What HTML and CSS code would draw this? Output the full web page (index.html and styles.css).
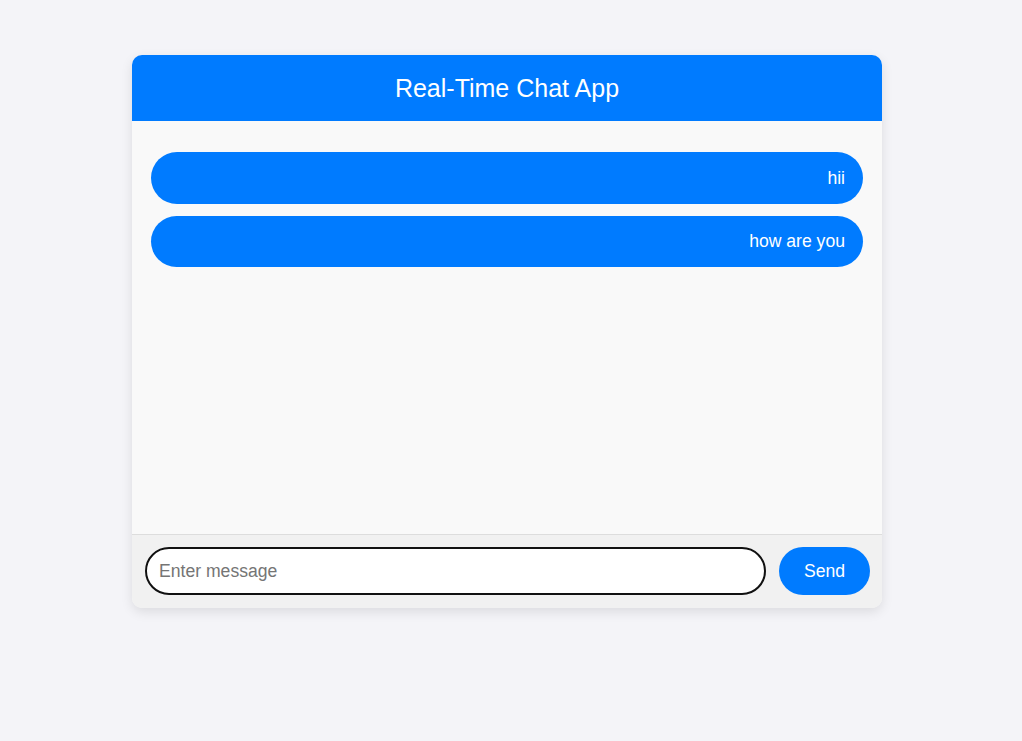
FILE: index.html
```html
<!DOCTYPE html>
<html>
<head>
<meta charset="utf-8">
<title>Real-Time Chat App</title>
<link rel="stylesheet" href="styles.css">
</head>
<body>
<div class="chat">
  <div class="chat-header">Real-Time Chat App</div>
  <div class="messages">
    <div class="msg">hii</div>
    <div class="msg">how are you</div>
  </div>
  <div class="composer">
    <input class="input" type="text" placeholder="Enter message" autofocus>
    <button class="send">Send</button>
  </div>
</div>
</body>
</html>
```
FILE: styles.css
```css
* { box-sizing: border-box; }
html, body { margin: 0; height: 100%; }
body {
  background: #f4f4f8;
  font-family: "Liberation Sans", Arial, sans-serif;
}
.chat {
  width: 750px;
  margin: 55px 0 0 132px;
  background: #f9f9f9;
  border-radius: 10px;
  overflow: hidden;
  box-shadow: 0 4px 12px rgba(0,0,0,0.1);
  display: flex;
  flex-direction: column;
}
.chat-header {
  background: #007bff;
  color: #fff;
  height: 66px;
  display: flex;
  align-items: center;
  justify-content: center;
  font-size: 25px;
}
.messages {
  height: 413px;
  padding: 31px 19px 20px;
  display: flex;
  flex-direction: column;
  gap: 12px;
  background: #f9f9f9;
}
.msg {
  background: #007bff;
  color: #fff;
  border-radius: 26px;
  height: 52px;
  display: flex;
  align-items: center;
  justify-content: flex-end;
  padding: 0 18px;
  font-size: 17.6px;
}
.msg + .msg { height: 51px; }
.composer {
  border-top: 1px solid #dddddd;
  background: #f1f1f1;
  padding: 12px 12px 13px 13px;
  display: flex;
  gap: 13px;
  align-items: center;
}
.input {
  flex: 1;
  height: 48px;
  border: 2px solid #111;
  border-radius: 24px;
  padding: 0 12px;
  font-size: 17.6px;
  font-family: "Liberation Sans", Arial, sans-serif;
  background: #fff;
  outline: none;
}
.input::placeholder { color: #757575; }
.send {
  width: 91px;
  height: 48px;
  border: none;
  border-radius: 24px;
  background: #007bff;
  color: #fff;
  font-size: 17.6px;
  font-family: "Liberation Sans", Arial, sans-serif;
}
```
